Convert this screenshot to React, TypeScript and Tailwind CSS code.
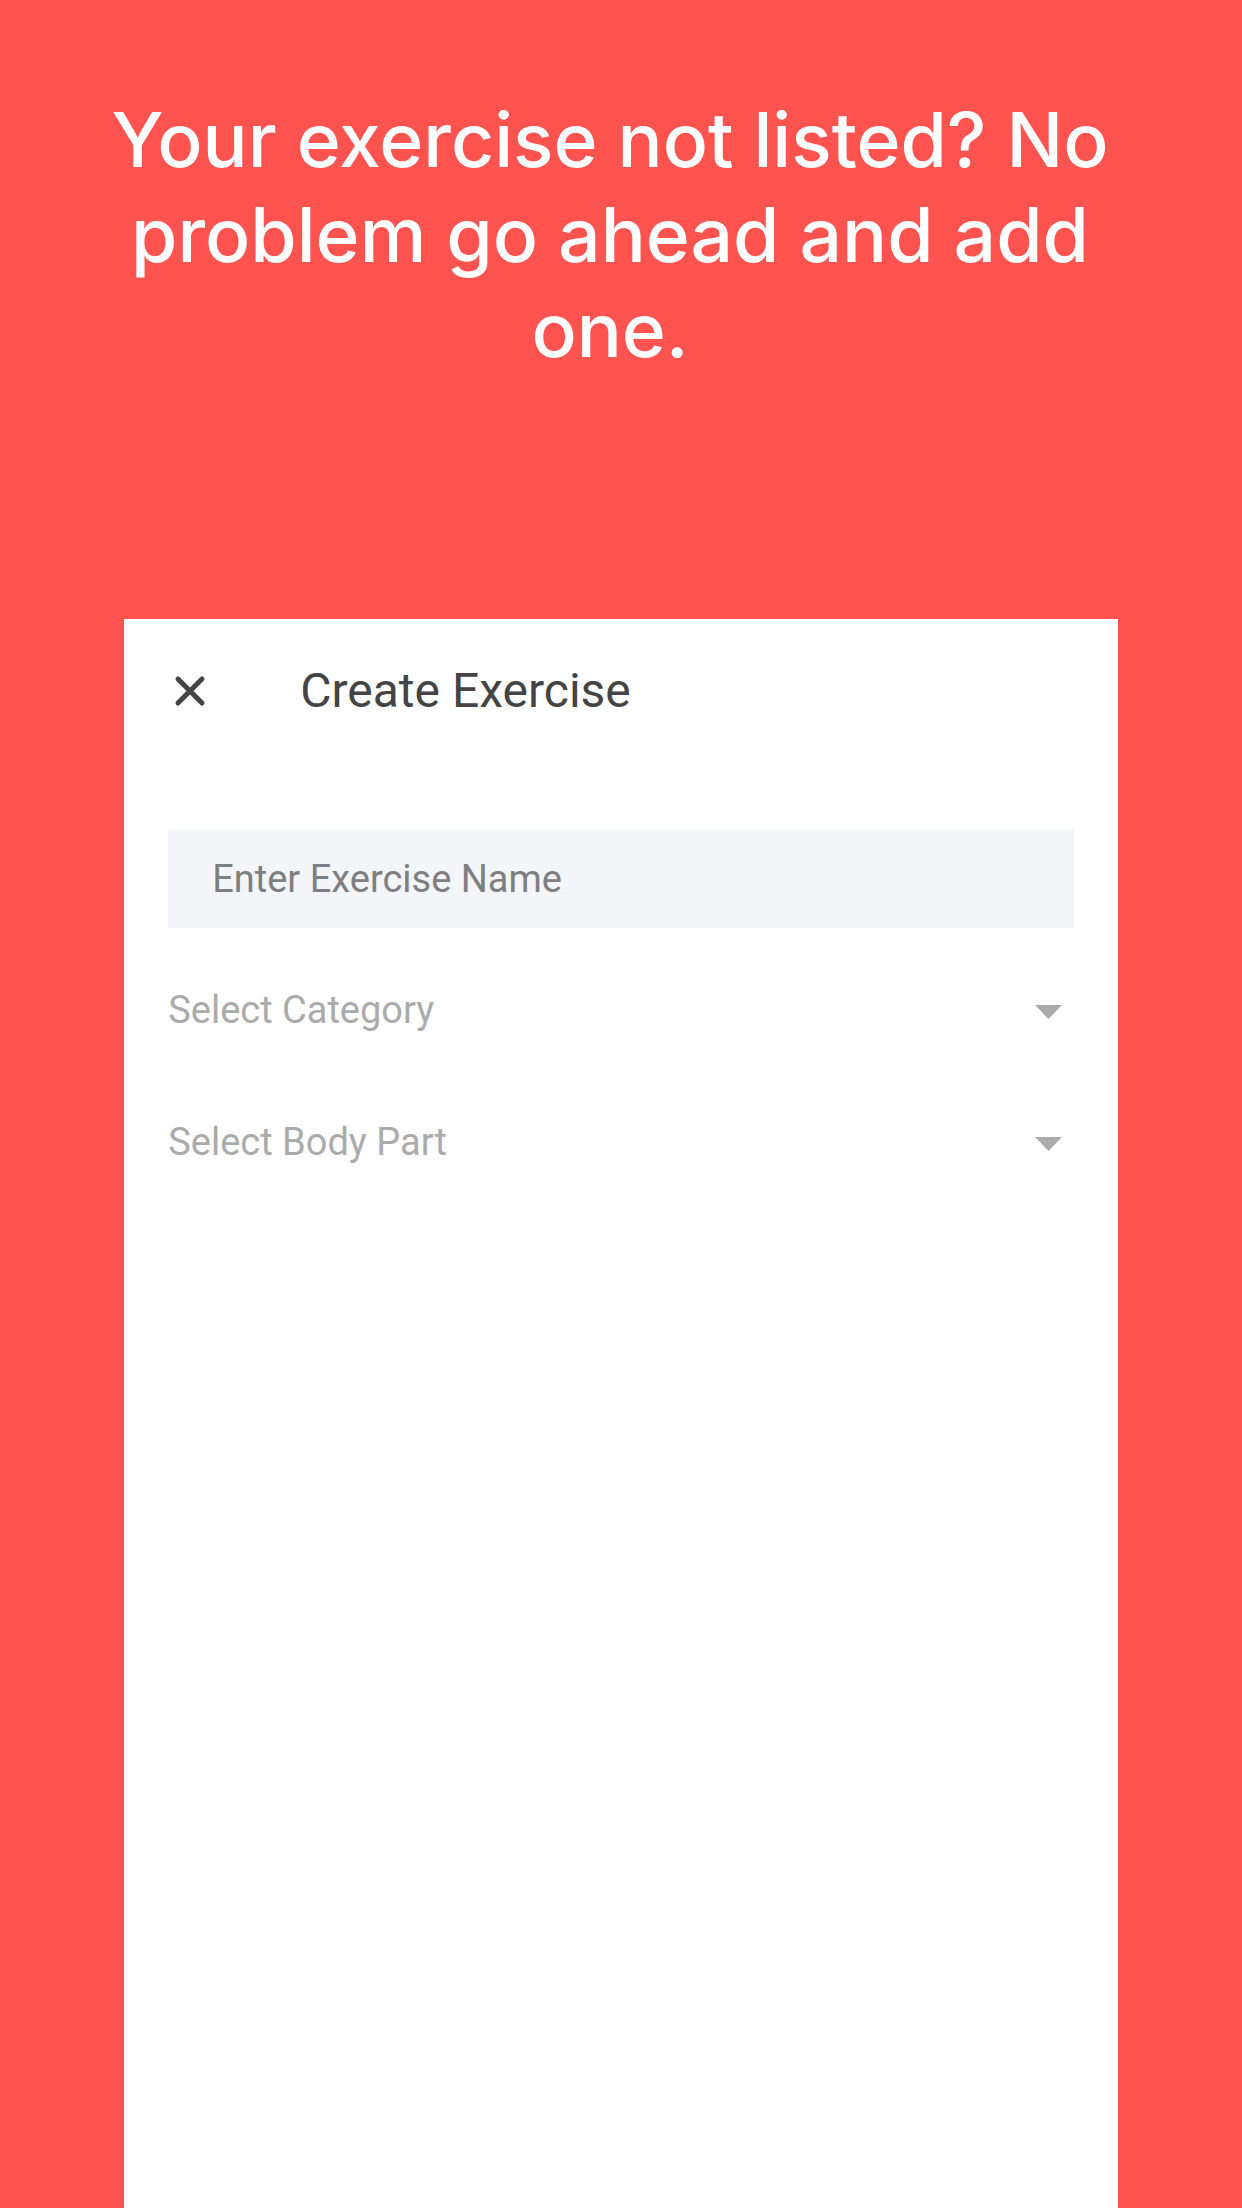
import { useState } from "react";

function SelectRow({ id, label, options }: { id: string; label: string; options: string[] }) {
  const [value, setValue] = useState("");
  return (
    <div className="relative flex h-[84px] items-center">
      <select
        id={id}
        aria-label={label}
        value={value}
        onChange={(e) => setValue(e.target.value)}
        className="h-full w-full appearance-none bg-transparent pr-16 pb-1 text-[38px] text-[#ababab] outline-none"
      >
        <option value="">{label}</option>
        {options.map((o) => (
          <option key={o} value={o}>
            {o}
          </option>
        ))}
      </select>
      <svg
        viewBox="0 0 28 14"
        className="pointer-events-none absolute right-3 h-[14px] w-7 fill-[#ababab]"
        aria-hidden="true"
      >
        <path d="M1 0h27L14.500 14z" />
      </svg>
    </div>
  );
}

export default function App() {
  return (
    <main className="flex min-h-screen flex-col bg-[#ff5350] font-['Roboto',sans-serif]">
      <h1 className="pt-[92px] pr-[22px] text-center font-['Inter',sans-serif] text-[75px] leading-[95px] font-medium text-white">
        <span className="block">Your exercise not listed? No</span>
        <span className="block">problem go ahead and add</span>
        <span className="block">one.</span>
      </h1>

      <section className="mx-[10%] mt-[242px] flex-1 bg-white px-11">
        <header className="flex h-[144px] items-center">
          <button type="button" aria-label="Close" className="flex h-11 w-11 items-center justify-center">
            <svg
              viewBox="0 0 44 44"
              className="h-11 w-11"
              fill="none"
              stroke="#444444"
              strokeWidth="5"
              strokeLinecap="round"
              aria-hidden="true"
            >
              <path d="M10 10L34 34M34 10L10 34" />
            </svg>
          </button>
          <h2 className="ml-[88px] text-[48px] leading-[60px] text-[#444444]">Create Exercise</h2>
        </header>

        <form className="mt-[66px] flex flex-col">
          <input
            id="exercise-name"
            type="text"
            aria-label="Enter Exercise Name"
            placeholder="Enter Exercise Name"
            className="h-[99px] w-full bg-[#f4f5f9] px-11 text-[38px] text-[#444444] outline-none placeholder:text-[#7f7f81]"
          />
          <div className="mt-[42px] flex flex-col gap-12">
            <SelectRow id="category" label="Select Category" options={["Barbell", "Dumbbell", "Machine", "Cardio"]} />
            <SelectRow id="body-part" label="Select Body Part" options={["Arms", "Back", "Chest", "Legs"]} />
          </div>
        </form>
      </section>
    </main>
  );
}
